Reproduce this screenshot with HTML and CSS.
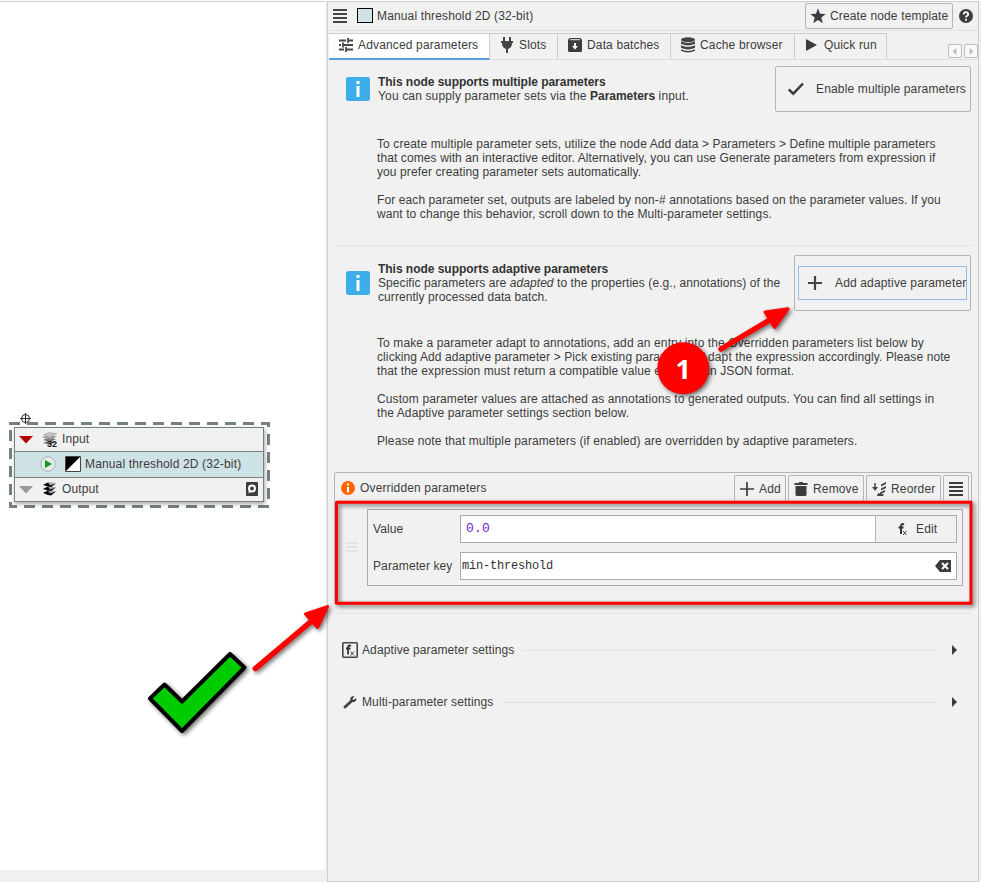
FILE: index.html
```
<!DOCTYPE html>
<html lang="en">
<head>
<meta charset="utf-8">
<title>Manual threshold 2D (32-bit)</title>
<link rel="stylesheet" href="styles.css">
</head>
<body>
<div class="app">
  <main class="canvas">
    <svg class="selection" width="264" height="100" viewBox="7 410 264 100">
      <rect x="10.5" y="423.500" width="258" height="83" fill="none" stroke="#75817f" stroke-width="3" stroke-linecap="square" stroke-dasharray="8 10"/>
      <g fill="none" stroke="#333"><circle cx="25.500" cy="418.500" r="4" fill="#fff"/><path d="M20 418.500h11M25.500 413v11"/></g>
    </svg>
    <div class="node">
      <div class="slot">
        <svg class="tri" width="14" height="8"><path d="M0 0h14L7 7.500z" fill="#b00000"/></svg>
        <svg class="stack" width="16" height="16" viewBox="0 0 16 16"><path d="M1 12l6-2.500 7 1.500-6 3zM1 9l6-2.500 7 1.500-6 3z" fill="#777"/><path d="M0 6.500l7-2.500 8 1.500-7 3z" fill="#999"/><path d="M1 4l6-2.500 8 1-7 4z" fill="#c4c4c4" stroke="#999" stroke-width=".5"/><text x="5" y="15.500" class="tiny">32</text></svg>
        <span>Input</span>
      </div>
      <div class="algorithm">
        <svg class="run" width="16" height="16"><circle cx="8" cy="8" r="7.300" fill="#e4eaea" stroke="#a9b0b0"/><path d="M5 4v8l7-4z" fill="#169b20"/></svg>
        <svg class="threshold" width="16" height="16"><path d="M.5.5h15v15H.5z" fill="#fff" stroke="#444"/><path d="M1 1h14L1 15z"/></svg>
        <span>Manual threshold 2D (32-bit)</span>
      </div>
      <div class="slot">
        <svg class="tri" width="14" height="8"><path d="M0 0h14L7 7.500z" fill="#999"/></svg>
        <svg class="stack" width="16" height="16" viewBox="0 0 16 16"><path d="M1 3.500L7 1l7 1-6 3.500zM1 7.500L7 5l7 1-6 3.500zM1 11.500L7 9l7 1-6 3.500z" fill="#aaa"/><path d="M1 4l5-2.500 2 3 6-2L9 6 6 5.500zM1 8l5-2.500 2 3 6-2-5 3.500-3-.5zM1 12l5-2.500 2 3 6-2-5 4-3-.5z" fill="#000"/></svg>
        <span>Output</span>
        <svg class="save" width="12" height="14"><rect width="12" height="14" rx="1" fill="#3c3c3c"/><circle cx="6" cy="6.500" r="3" fill="none" stroke="#fff" stroke-width="2"/><path d="M3 8l-.5 3.500L6 9z" fill="#fff"/></svg>
      </div>
    </div>
    <div class="scroll"></div>
  </main>

  <aside class="panel">
    <header class="head">
      <svg class="menu" width="14" height="14"><path d="M0 1h14M0 5h14M0 9h14M0 13h14" stroke="#444" stroke-width="2"/></svg>
      <i class="swatch"></i>
      <span class="title">Manual threshold 2D (32-bit)</span>
      <button class="template"><svg width="16" height="16" viewBox="0 0 16 16"><path d="M8 .3l2 5.400 5.700.3-4.400 3.600 1.500 5.700L8 12.100l-4.800 3.200 1.500-5.700L.3 6 6 5.700z" fill="#3c3c3c"/></svg>Create node template</button>
      <svg class="help" width="14" height="14"><circle cx="7" cy="7" r="7" fill="#3c3c3c"/><path d="M4.800 5.500C4.800 2.400 9.300 2.600 9.200 5.200 9.200 6.800 7 6.800 7 8.500" fill="none" stroke="#fff" stroke-width="1.800"/><circle cx="7" cy="10.800" r="1.100" fill="#fff"/></svg>
    </header>
    <nav class="tabs">
      <div class="tab active"><svg width="16" height="16"><path d="M1 3.500h7M11 3.500h4M1 8h2M6 8h9M1 12.500h5M9 12.500h6M10 1v5M5 5.500v5M8 10v5" fill="none" stroke="#444" stroke-width="1.800"/></svg>Advanced parameters</div>
      <div class="tab slots"><svg width="16" height="16"><path d="M4 0h2v4h4V0h2v4h2v2h-1c0 3-1 5-4 6v4H7v-4C4 11 3 9 3 6H2V4h2z" fill="#444"/></svg>Slots</div>
      <div class="tab batches"><svg width="16" height="16"><path d="M2.500 1h11L15 3v10.500q0 1.500-1.500 1.500h-11Q1 15 1 13.500V3z" fill="#3c3c3c"/><path d="M3 2.700h10" stroke="#eee"/><path d="M7 6h2v3h2l-3 3.500L5 9h2z" fill="#fff"/></svg>Data batches</div>
      <div class="tab cache"><svg width="16" height="16"><g fill="#444"><ellipse cx="8" cy="2.700" rx="7" ry="2.500"/><path d="M1 4.300q7 3.500 14 0v2.500q-7 3.500-14 0zM1 8.300q7 3.500 14 0v2.500q-7 3.500-14 0zM1 12.300q7 3.500 14 0v1.500q-7 3.500-14 0z"/></g></svg>Cache browser</div>
      <div class="tab quick"><svg width="16" height="16"><path d="M2 2v12l11-6z" fill="#3c3c3c"/></svg>Quick run</div>
      <div class="pager">
        <i><svg width="12" height="12"><path d="M7.500 2v7L3.500 5.500z" fill="#bbb"/></svg></i>
        <i><svg width="12" height="12"><path d="M4.500 2v7l4-3.500z" fill="#bbb"/></svg></i>
      </div>
    </nav>
    <div class="content">
      <section class="message first">
        <div class="intro">
          <svg class="info" width="24" height="24"><rect width="24" height="24" rx="2.500" fill="#3daee9"/><path d="M10.500 4h3v3h-3zM10.500 9h3v11h-3z" fill="#fff"/></svg>
          <p><b>This node supports multiple parameters</b><br>You can supply parameter sets via the <b>Parameters</b> input.</p>
          <button class="enable"><svg width="16" height="16"><path d="M.8 8.500l4.500 4.200L15 2.500" fill="none" stroke="#3c3c3c" stroke-width="2.500"/></svg>Enable multiple parameters</button>
        </div>
        <div class="details">
          <p>To create multiple parameter sets, utilize the node Add data &gt; Parameters &gt; Define multiple parameters<br>that comes with an interactive editor. Alternatively, you can use Generate parameters from expression if<br>you prefer creating parameter sets automatically.</p>
          <p>For each parameter set, outputs are labeled by non-# annotations based on the parameter values. If you<br>want to change this behavior, scroll down to the Multi-parameter settings.</p>
        </div>
      </section>
      <section class="message second">
        <div class="intro">
          <svg class="info" width="24" height="24"><rect width="24" height="24" rx="2.500" fill="#3daee9"/><path d="M10.500 4h3v3h-3zM10.500 9h3v11h-3z" fill="#fff"/></svg>
          <p><b>This node supports adaptive parameters</b><br>Specific parameters are <em>adapted</em> to the properties (e.g., annotations) of the<br>currently processed data batch.</p>
          <button class="adaptive"><span><svg width="14" height="14"><path d="M0 7h14M7 0v14" stroke="#444" stroke-width="2.200"/></svg>Add adaptive parameter</span></button>
        </div>
        <div class="details">
          <p>To make a parameter adapt to annotations, add an entry into the Overridden parameters list below by<br>clicking Add adaptive parameter &gt; Pick existing para<span class="wide">meter. A</span>dapt the expression accordingly. Please note<br>that the expression must return a compatible value <span class="wide">encoded</span> in JSON format.</p>
          <p>Custom parameter values are attached as annotations to generated outputs. You can find all settings in<br>the Adaptive parameter settings section below.</p>
          <p>Please note that multiple parameters (if enabled) are overridden by adaptive parameters.</p>
        </div>
      </section>
      <section class="overridden">
        <div class="bar">
          <svg width="14" height="14"><circle cx="7" cy="7" r="7" fill="#f60"/><path d="M6 2.500h2v2H6zM6 6h2v5.500H6z" fill="#fff"/></svg>
          <span>Overridden parameters</span>
          <div class="tools">
            <button class="add"><svg width="16" height="16"><path d="M1 8h14M8 1v14" stroke="#3c3c3c" stroke-width="1.700"/></svg>Add</button>
            <button class="remove"><svg width="16" height="16"><path d="M1.500 2h4l1-1h3l1 1h4v2h-13zM2.500 5h11v8.500Q13.500 15 12 15H4q-1.500 0-1.500-1.500z" fill="#3c3c3c"/></svg>Remove</button>
            <button class="reorder"><svg width="16" height="16"><path d="M4 2v5" stroke="#444" stroke-width="1.500"/><path d="M1 6h6l-3 4z" fill="#444"/><path d="M15 1v2l-5 2.500v-2zM15 5v2l-5 2.500v-2zM14 9v2l-5 2.500v-2zM7 12l6 1.500-1 1.500H6z" fill="#444"/></svg>Reorder</button>
            <button class="more"><svg width="14" height="14"><path d="M0 1h14M0 5h14M0 9h14M0 13h14" stroke="#3c3c3c" stroke-width="1.900"/></svg></button>
          </div>
        </div>
        <div class="list">
          <svg class="grip" width="12" height="10"><path d="M0 1h12M0 5h12M0 9h12" stroke="#ddd" stroke-width="1.500"/></svg>
          <div class="card">
            <label>Value</label>
            <div class="field"><code class="value">0.0</code><button class="edit"><svg width="14" height="16"><path d="M8 3.500q-3-1.500-3 2V13M2.500 6.500h5" fill="none" stroke="#333" stroke-width="2"/><path d="M7 10l3.500 4M10.500 10L7 14" stroke="#444"/></svg>Edit</button></div>
            <label>Parameter key</label>
            <div class="field"><code class="key">min-threshold</code><svg class="clear" width="16" height="12"><path d="M5 0h11v12H5L0 6z" fill="#3c3c3c"/><path d="M7 3l6 6M13 3L7 9" stroke="#fff" stroke-width="2"/></svg></div>
          </div>
        </div>
      </section>
      <div class="group one"><svg width="16" height="16"><rect x=".8" y=".8" width="14.400" height="14.400" rx="1" fill="none" stroke="#444" stroke-width="1.600"/><path d="M9 4q-3-1.500-3 1.500v7M4 6.500h4.500" fill="none" stroke="#333" stroke-width="1.800"/><path d="M8.500 9.500l3.500 4M12 9.500l-3.500 4" stroke="#444"/></svg><span>Adaptive parameter settings</span><hr><svg class="expand" width="5" height="10"><path d="M0 0v10l5-5z" fill="#3c3c3c"/></svg></div>
      <div class="group two"><svg width="16" height="16"><path d="M3 13L9.500 7" stroke="#444" stroke-width="3" stroke-linecap="round"/><path d="M14 4L11.500 6l-1-1.200 2-2.400C9.500 1.500 7.500 4 8.500 6.500c1 2.300 4.300 2.200 5.500.3.500-.8.400-1.900 0-2.800z" fill="#444"/></svg><span>Multi-parameter settings</span><hr><svg class="expand" width="5" height="10"><path d="M0 0v10l5-5z" fill="#3c3c3c"/></svg></div>
    </div>
  </aside>
</div>

<svg class="annotations" width="981" height="882">
  <g class="cast">
    <rect x="336.500" y="502.300" width="634.500" height="101" fill="none" stroke="#f00" stroke-width="3" stroke-linejoin="round"/>
  </g>
  <g class="cast">
    <circle cx="683.300" cy="368.300" r="26" fill="#f00"/>
  </g>
  <g class="cast" fill="#f00" stroke="#f00" stroke-linecap="round" stroke-linejoin="round">
    <path d="M721 349L773 318" stroke-width="5.500"/>
    <path d="M788 308.800L765 312 774.500 327.500z" stroke-width="3"/>
  </g>
  <g class="cast" fill="#f00" stroke="#f00" stroke-linecap="round" stroke-linejoin="round">
    <path d="M255.300 668.600L314 619" stroke-width="5.500"/>
    <path d="M327.500 606.600L305.500 614 317.500 627.500z" stroke-width="3"/>
  </g>
  <g class="cast">
    <path d="M230 654L244.500 667.500 182 731 150 698.500 164.500 684.500 182 701.500z" fill="#0c0" stroke="#000" stroke-width="4" stroke-linejoin="round"/>
  </g>
  <text x="683.300" y="379" text-anchor="middle" class="step">1</text>
</svg>
</body>
</html>
```
FILE: styles.css
```
* { box-sizing: border-box; }
body { margin: 0; background: #f1f1f1; color: #3c3c3c; font: 12px/14px "Liberation Sans", Arial, sans-serif; letter-spacing: .11px; overflow: hidden; }
p { margin: 0; }
svg { display: block; flex: none; }
button { font: inherit; letter-spacing: .15px; color: inherit; background: #f1f1f1; border: 1px solid #b4b4b9; border-radius: 2px; padding: 0; display: flex; align-items: center; white-space: nowrap; }

.app { display: flex; width: 981px; height: 882px; border-top: 1px solid #fff; }
.canvas { width: 325px; position: relative; background: #fff; border-top: 1px solid #cdcdcd; display: flex; flex-direction: column; justify-content: flex-end; }
.scroll { height: 12px; background: #f0f0f0; }
.selection { position: absolute; left: 7px; top: 408px; }
.node { position: absolute; left: 14px; top: 425px; width: 250px; height: 75px; border: 1px solid #75817f; background: #75817f; display: grid; grid-template-rows: 23px 25px 23px; gap: 1px; box-shadow: 1px 2px 4px rgba(0,0,0,.35); }
.slot, .algorithm { display: flex; align-items: center; background: #f1f1f1; padding-bottom: 2px; }
.algorithm { background: #cfe2e5; padding-left: 25px; letter-spacing: .15px; }
.tri { margin-left: 4px; margin-top: 2px; }
.stack { margin: 0 4px 0 9px; }
.tiny { font: bold 9px "Liberation Sans", sans-serif; letter-spacing: 0; fill: #222; }
.threshold { margin: 0 4px 0 9px; }
.save { margin-left: auto; margin-right: 5px; }

.panel { width: 652px; margin-left: 2px; border: 1px solid #cdcdcd; padding-left: 1px; background: #f1f1f1; display: flex; flex-direction: column; }
.head { height: 29px; flex: none; display: flex; align-items: center; border-bottom: 1px solid #e2e2e2; padding-left: 4px; }
.title { letter-spacing: .15px; }
.menu { margin-right: 10px; }
.swatch { width: 16px; height: 15px; border: 1px solid #000; background: #cfe2e5; margin: -1px 4px 0 0; }
.template { width: 148px; height: 26px; margin-left: auto; padding-left: 4px; gap: 4px; }
.help { margin: 0 5px 0 6px; }
.tabs { height: 28px; flex: none; display: flex; border-bottom: 1px solid #e0e0e0; margin-top: 1px; padding-top: 1px; letter-spacing: .15px; }
.tab { display: flex; align-items: center; gap: 3px; height: 26px; border-top: 1px solid #cdcdcd; border-right: 1px solid #cdcdcd; padding: 0 0 4px 9px; white-space: nowrap; }
.active { width: 161px; height: 27px; gap: 4px; background: #fff; border-bottom: 2px solid #5c9fe0; padding-bottom: 3px; }
.slots { width: 68px; gap: 4px; }
.batches { width: 113px; gap: 4px; }
.cache { width: 124px; gap: 4px; }
.quick { width: 92px; gap: 4px; }
.pager { display: flex; gap: 2px; margin: 11px 0 0 auto; }
.pager i { width: 14px; height: 14px; border: 1px solid #bdbdbd; border-radius: 2px; background: #f8f8f8; }
.pager svg { margin-top: .5px; }

.content { padding-left: 5px; }
.message { width: 638px; white-space: nowrap; }
.intro { display: flex; align-items: flex-start; padding-left: 12px; }
.intro p { padding-left: 8px; letter-spacing: .07px; }
.intro button { margin-left: auto; margin-right: 1px; }
.intro b { color: #333; letter-spacing: -.03px; }
.first { height: 186px; border-bottom: 1px solid #e2e2e2; }
.first .intro { height: 77px; padding-top: 6px; }
.first .info { margin-top: 11px; }
.first .intro p { padding-top: 9px; letter-spacing: .15px; }
.enable { width: 196px; height: 46px; padding-left: 12px; gap: 12px; }
.second { height: 226px; }
.second .intro { height: 90px; padding-top: 9px; }
.second .info { margin-top: 16px; }
.second .intro p { padding-top: 7px; }
.adaptive { width: 177px; height: 56px; padding: 0 3px; }
.adaptive span { width: 169px; height: 34px; border: 1px solid #90bce8; display: flex; align-items: center; gap: 13px; padding-left: 9px; }
.details { padding-left: 43px; letter-spacing: .1px; }
.details p + p { margin-top: 14px; }
.wide { letter-spacing: .5px; }

.overridden { width: 638px; height: 142px; border-bottom: 1px solid #e2e2e2; }
.bar { height: 29px; border: 1px solid #b4b4b9; border-bottom: 0; border-radius: 2px 2px 0 0; display: flex; align-items: center; gap: 5px; padding: 2px 2px 0 6px; letter-spacing: .15px; }
.tools { display: flex; gap: 2px; margin-left: auto; align-self: stretch; }
.tools button { border-bottom: 0; gap: 4px; padding-left: 4px; }
.tools .add { width: 52px; }
.tools .remove { width: 76px; }
.tools .reorder { width: 75px; }
.tools .more { width: 26px; padding-left: 5px; }
.list { height: 103px; border: 1px solid #c4c4c4; border-top: 0; padding: 8px 8px 0 11px; display: flex; align-items: flex-start; }
.grip { margin: 33px 9px 0 0; }
.card { flex: 1; height: 77px; border: 1px solid #ababab; display: grid; grid-template: 28px 28px / 87px 1fr; row-gap: 9px; align-items: center; padding: 5px 5px 0; }
.field { height: 28px; border: 1px solid #ababab; background: #fff; display: flex; align-items: center; justify-content: space-between; }
code { font: 12px/14px "Liberation Mono", monospace; color: #333; padding-left: 1px; }
.value { font-size: 13px; color: #7a13c4; padding-left: 5px; letter-spacing: .2px; }
.key { letter-spacing: -.2px; }
.edit { height: 26px; width: 81px; border-width: 0 0 0 1px; border-radius: 0; padding-left: 20px; gap: 6px; }
.clear { margin-right: 5px; }

.group { display: flex; align-items: center; height: 16px; padding-left: 8px; }
.group.one { margin-top: 28px; }
.group.two { margin-top: 36px; }
.group span { margin-left: 4px; }
hr { flex: 1; border: 0; height: 1px; background: #e2e2e2; margin: 0 16px 0 8px; }
.expand { margin-right: 21px; }

.annotations { position: absolute; left: 0; top: 0; pointer-events: none; }
.cast { filter: drop-shadow(2px 2px 2px rgba(0,0,0,.55)); }
.step { font: bold 27px "Open Sans", "Noto Sans", sans-serif; fill: #fff; }
```
